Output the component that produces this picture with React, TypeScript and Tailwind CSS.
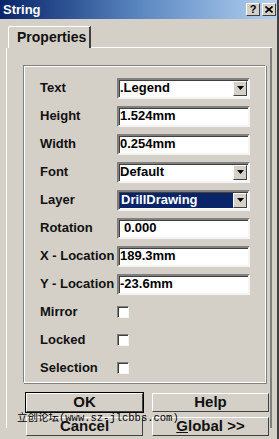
import React from "react"

const font = { fontFamily: '"Liberation Sans", Arial, sans-serif' }

function Sunken({ children, className = "" }: { children?: React.ReactNode; className?: string }) {
  return (
    <div
      className={
        "flex items-center h-[21px] w-[133px] bg-white border-2 border-t-[#808080] border-l-[#808080] border-b-[#f4f4f4] border-r-[#f4f4f4] shadow-[inset_1px_1px_0_#404040] " +
        className
      }
    >
      {children}
    </div>
  )
}

function DropArrow() {
  return (
    <div className="ml-auto mr-[1px] w-[14px] h-[15px] bg-[#d4d0c8] border border-t-white border-l-white border-b-[#404040] border-r-[#404040] flex items-center justify-center">
      <svg width="7" height="4" viewBox="0 0 7 4">
        <path d="M0 0h7L3.5 4z" fill="#000" />
      </svg>
    </div>
  )
}

function Row({ label, children }: { label: string; children: React.ReactNode }) {
  return (
    <div className="flex items-center h-[28px]">
      <div className="w-[77px] text-[13px] font-bold text-[#111] whitespace-nowrap">{label}</div>
      {children}
    </div>
  )
}

function Check() {
  return (
    <div className="w-[12px] h-[12px] bg-white border border-t-[#808080] border-l-[#808080] border-b-[#f4f4f4] border-r-[#f4f4f4] shadow-[inset_1px_1px_0_#404040]" />
  )
}

function Btn({ children, def = false }: { children: React.ReactNode; def?: boolean }) {
  return (
    <div
      className={
        "w-[117px] h-[19px] flex items-center justify-center text-[15px] font-bold text-[#111] bg-[#d4d0c8] border border-t-white border-l-white border-b-[#404040] border-r-[#404040] " +
        (def ? "outline outline-1 outline-black" : "")
      }
    >
      {children}
    </div>
  )
}

export default function App() {
  return (
    <div className="relative w-[279px] h-[439px] bg-[#d4d0c8] overflow-hidden border-r-2 border-r-[#404040]" style={font}>
      {/* title bar */}
      <div className="h-[19px] bg-gradient-to-r from-[#0a246a] via-[#5a86c0] to-[#b4d2f2] flex items-center pl-[3px] pr-[1px]">
        <span className="text-white text-[13px] font-bold">String</span>
        <div className="ml-auto flex gap-[2px]">
          <div className="w-[14px] h-[13px] bg-[#d4d0c8] border border-t-white border-l-white border-b-[#404040] border-r-[#404040] flex items-center justify-center text-[11px] font-bold leading-none">
            ?
          </div>
          <div className="w-[14px] h-[13px] bg-[#d4d0c8] border border-t-white border-l-white border-b-[#404040] border-r-[#404040] flex items-center justify-center">
            <svg width="8" height="7" viewBox="0 0 8 7">
              <path d="M0.5 0.5l7 6M7.5 0.5l-7 6" stroke="#000" strokeWidth="1.6" />
            </svg>
          </div>
        </div>
      </div>

      {/* tabs */}
      <div className="pl-[6px] pr-[5px] pt-[7px]">
        <div className="flex items-end">
          <div className="ml-[2px] w-[83px] h-[22px] border-t border-l border-t-white border-l-white border-r-2 border-r-[#404040] rounded-tl-[2px] flex items-center pl-[8px] text-[14px] font-bold text-[#111]">
            Properties
          </div>
          <div className="flex-1 border-b border-b-white" />
        </div>
        <div className="h-[380px] border-l border-l-white border-r-2 border-r-[#808080] pl-[16px] pr-[4px] pt-[17px]">
          {/* group box */}
          <div className="h-[318px] border border-t-[#808080] border-l-[#808080] border-b-white border-r-white shadow-[inset_1px_1px_0_white,1px_1px_0_#808080] pl-[16px] pt-[8px]">
            <Row label="Text">
              <Sunken>
                <span className="pl-[1px] text-[13px] font-bold">.Legend</span>
                <DropArrow />
              </Sunken>
            </Row>
            <Row label="Height">
              <Sunken>
                <span className="pl-[1px] text-[13px] font-bold">1.524mm</span>
              </Sunken>
            </Row>
            <Row label="Width">
              <Sunken>
                <span className="pl-[1px] text-[13px] font-bold">0.254mm</span>
              </Sunken>
            </Row>
            <Row label="Font">
              <Sunken>
                <span className="pl-[1px] text-[13px] font-bold">Default</span>
                <DropArrow />
              </Sunken>
            </Row>
            <Row label="Layer">
              <Sunken>
                <span className="ml-[1px] h-[15px] w-[113px] flex items-center bg-[#0a246a] text-white text-[13px] font-bold pl-[1px]">
                  DrillDrawing
                </span>
                <DropArrow />
              </Sunken>
            </Row>
            <Row label="Rotation">
              <Sunken>
                <span className="pl-[5px] text-[13px] font-bold">0.000</span>
              </Sunken>
            </Row>
            <Row label="X - Location">
              <Sunken>
                <span className="pl-[1px] text-[13px] font-bold">189.3mm</span>
              </Sunken>
            </Row>
            <Row label="Y - Location">
              <Sunken>
                <span className="pl-[1px] text-[13px] font-bold">-23.6mm</span>
              </Sunken>
            </Row>
            <Row label="Mirror">
              <Check />
            </Row>
            <Row label="Locked">
              <Check />
            </Row>
            <Row label="Selection">
              <Check />
            </Row>
          </div>

          {/* buttons */}
          <div className="grid grid-cols-[117px_117px] gap-x-[9px] gap-y-[5px] mt-[10px] ml-[3px]">
            <Btn def>OK</Btn>
            <Btn>Help</Btn>
            <Btn>Cancel</Btn>
            <Btn>
              <span>
                <span className="underline">G</span>lobal &gt;&gt;
              </span>
            </Btn>
          </div>
        </div>
      </div>

      {/* watermark */}
      <div className="absolute left-[17px] top-[409px] flex items-baseline text-black whitespace-nowrap">
        <span className="text-[10.5px]" style={{ fontFamily: '"Noto Sans CJK SC", sans-serif' }}>
          立创论坛
        </span>
        <span className="text-[10.5px]" style={{ fontFamily: '"Liberation Mono", monospace' }}>
          (www.sz-jlcbbs.com)
        </span>
      </div>
    </div>
  )
}
